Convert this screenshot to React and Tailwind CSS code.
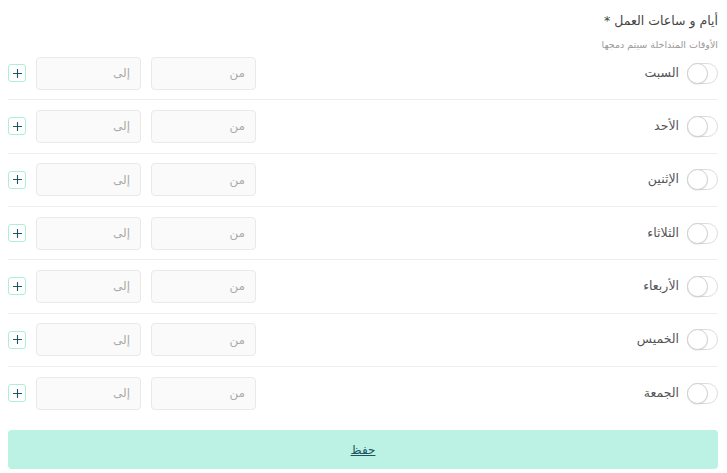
import React, { useState } from 'react';

const days = ['السبت', 'الأحد', 'الإثنين', 'الثلاثاء', 'الأربعاء', 'الخميس', 'الجمعة'];

function Toggle({ on, onClick }) {
  return (
    <button
      type="button"
      onClick={onClick}
      className={`relative w-[31px] h-[21px] rounded-full border border-[#dcdcdc] ${on ? 'bg-[#bbf2e4]' : 'bg-white'}`}
    >
      <span
        className={`absolute top-[-1px] w-[21px] h-[21px] rounded-full bg-white border border-[#cfcfcf] shadow-[0_1px_1px_rgba(0,0,0,0.08)] ${on ? 'right-[-1px]' : 'left-[-1px]'}`}
      />
    </button>
  );
}

function DayRow({ name, last }) {
  const [on, setOn] = useState(false);
  return (
    <div className={`flex items-center py-[9.67px] ${last ? '' : 'border-b border-[#eeeeee]'}`}>
      <div className="flex items-center gap-[8px] flex-1">
        <Toggle on={on} onClick={() => setOn(!on)} />
        <span className="text-[12.5px] text-[#555]">{name}</span>
      </div>
      <div className="flex items-center">
        <input
          placeholder="من"
          className="w-[105px] h-[33px] rounded-[4px] border border-[#e9e9e9] bg-[#fafafa] px-[10px] text-[12px] placeholder:text-[#aaa] outline-none"
        />
        <input
          placeholder="إلى"
          className="w-[105px] h-[33px] mr-[10px] rounded-[4px] border border-[#e9e9e9] bg-[#fafafa] px-[10px] text-[12px] placeholder:text-[#aaa] outline-none"
        />
        <button
          type="button"
          className="mr-[10px] w-[18px] h-[18px] rounded-[3px] border border-[#aeeedc] bg-white flex items-center justify-center text-[#1d5560]"
        >
          <svg width="11" height="11" viewBox="0 0 11 11">
            <path d="M5.5 1v9M1 5.5h9" stroke="currentColor" strokeWidth="1.1" />
          </svg>
        </button>
      </div>
    </div>
  );
}

export default function App() {
  return (
    <div dir="rtl" className="bg-white min-h-screen pr-[9px] pl-[8px] pt-[12px]" style={{ fontFamily: '"DejaVu Sans", sans-serif' }}>
      <h2 className="text-[12.5px] text-[#444] leading-[18px]">أيام و ساعات العمل *</h2>
      <p className="text-[9.5px] text-[#999] mt-[8px] leading-[14px]">الأوقات المتداخلة سيتم دمجها</p>
      <div className="mt-[-5px]">
        {days.map((d, i) => (
          <DayRow key={d} name={d} last={i === days.length - 1} />
        ))}
      </div>
      <button
        type="button"
        className="mt-[11px] w-full h-[39px] rounded-[4px] bg-[#bbf2e4] text-[#1d5560] text-[12px] underline"
      >
        حفظ
      </button>
    </div>
  );
}
